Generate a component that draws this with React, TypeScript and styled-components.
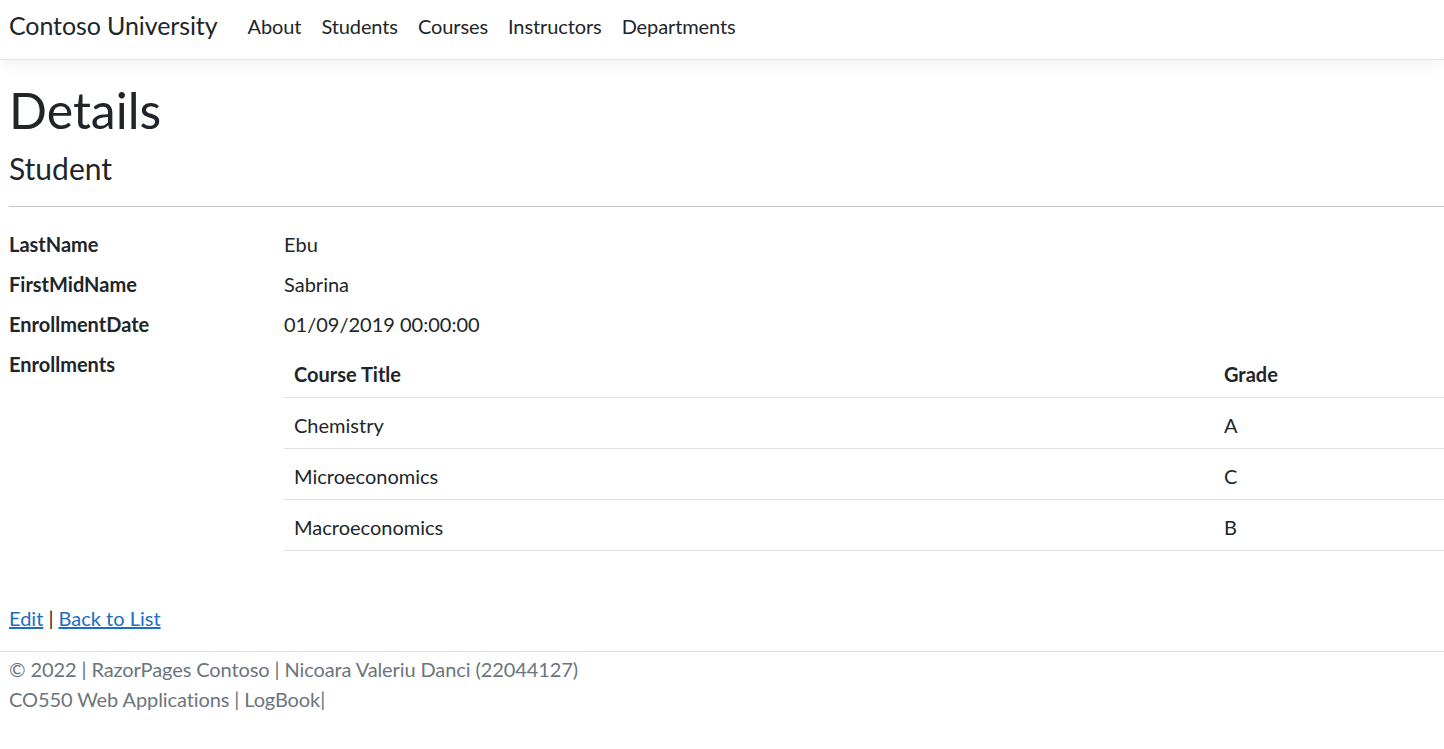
import React from "react";
import styled, { createGlobalStyle } from "styled-components";

const GlobalStyle = createGlobalStyle`
  html, body {
    margin: 0;
    padding: 0;
    background: #ffffff;
  }
  body {
    font-family: "Segoe UI", Lato, "Noto Sans", sans-serif;
    font-size: 20px;
    line-height: 1.5;
    color: #212529;
  }
  * { box-sizing: border-box; }
`;

const NavBar = styled.header`
  display: flex;
  align-items: center;
  height: 60px;
  padding: 0 0 8px 9px;
  border-bottom: 1px solid #e5e5e5;
  box-shadow: 0 5px 15px rgba(0, 0, 0, 0.05);
  margin-bottom: 20px;
`;

const Brand = styled.a`
  font-size: 25px;
  line-height: 1.5;
  color: #212529;
  text-decoration: none;
  margin-right: 20px;
  letter-spacing: -0.1px;
`;

const NavList = styled.nav`
  display: flex;
  align-items: center;
`;

const NavLink = styled.a`
  font-size: 20px;
  line-height: 30px;
  padding: 0 10px;
  color: #212529;
  text-decoration: none;
  letter-spacing: -0.1px;
`;

const Main = styled.main`
  padding-left: 9px;
`;

const Title = styled.h1`
  margin: 0 0 10px;
  font-size: 50px;
  font-weight: 400;
  line-height: 1.2;
`;

const SubTitle = styled.h4`
  margin: 0;
  font-size: 30px;
  font-weight: 400;
  line-height: 1.2;
`;

const Rule = styled.hr`
  margin: 20px 0 22px;
  border: 0;
  border-top: 1px solid #c8c9ca;
`;

const DetailList = styled.dl`
  display: grid;
  grid-template-columns: 275px 1fr;
  margin: 0 0 42px;
`;

const Term = styled.dt`
  font-weight: 700;
  margin: 0 0 10px;
`;

const Value = styled.dd`
  margin: 0 0 10px;
`;

const Table = styled.table`
  width: 100%;
  border-collapse: collapse;
  margin-bottom: 0;
`;

const HeadCell = styled.th<{ $w?: string }>`
  text-align: left;
  font-weight: 700;
  padding: 10px 10px 8px;
  line-height: 30px;
  border-bottom: 1px solid #dee2e6;
  width: ${(p) => p.$w ?? "auto"};
`;

const Cell = styled.td`
  padding: 12px 10px 8px;
  line-height: 30px;
  border-bottom: 1px solid #dee2e6;
`;

const Actions = styled.div`
  line-height: 30px;
  margin-bottom: 18px;
`;

const Link = styled.a`
  color: #1b6ec2;
  text-decoration: underline;
`;

const Footer = styled.footer`
  border-top: 1px solid #e5e5e5;
  padding-left: 9px;
  padding-top: 2px;
  color: #6c757d;
  line-height: 30px;
  letter-spacing: -0.1px;
`;

const FooterLine = styled.div``;

const enrollments = [
  { title: "Chemistry", grade: "A" },
  { title: "Microeconomics", grade: "C" },
  { title: "Macroeconomics", grade: "B" },
];

export default function App() {
  return (
    <>
      <GlobalStyle />
      <NavBar>
        <Brand href="#">Contoso University</Brand>
        <NavList>
          <NavLink href="#">About</NavLink>
          <NavLink href="#">Students</NavLink>
          <NavLink href="#">Courses</NavLink>
          <NavLink href="#">Instructors</NavLink>
          <NavLink href="#">Departments</NavLink>
        </NavList>
      </NavBar>
      <Main>
        <Title>Details</Title>
        <SubTitle>Student</SubTitle>
        <Rule />
        <DetailList>
          <Term>LastName</Term>
          <Value>Ebu</Value>
          <Term>FirstMidName</Term>
          <Value>Sabrina</Value>
          <Term>EnrollmentDate</Term>
          <Value>01/09/2019 00:00:00</Value>
          <Term>Enrollments</Term>
          <Value>
            <Table>
              <thead>
                <tr>
                  <HeadCell $w="930px">Course Title</HeadCell>
                  <HeadCell>Grade</HeadCell>
                </tr>
              </thead>
              <tbody>
                {enrollments.map((e) => (
                  <tr key={e.title}>
                    <Cell>{e.title}</Cell>
                    <Cell>{e.grade}</Cell>
                  </tr>
                ))}
              </tbody>
            </Table>
          </Value>
        </DetailList>
        <Actions>
          <Link href="#">Edit</Link> | <Link href="#">Back to List</Link>
        </Actions>
      </Main>
      <Footer>
        <FooterLine>© 2022 | RazorPages Contoso | Nicoara Valeriu Danci (22044127)</FooterLine>
        <FooterLine>CO550 Web Applications | LogBook|</FooterLine>
      </Footer>
    </>
  );
}
